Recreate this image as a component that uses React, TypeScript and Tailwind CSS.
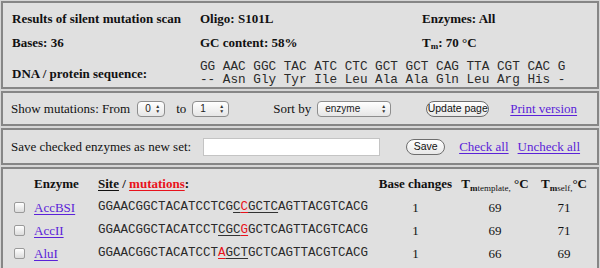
import React from "react";

const serif = { fontFamily: '"Liberation Serif", "Times New Roman", serif' };
const mono = { fontFamily: '"Liberation Mono", "Courier New", monospace' };

function Select({ w, label }: { w: number; label: string }) {
  return (
    <div
      className="flex h-[16px] items-center justify-between rounded-[4px] border border-[#8e8e8e] bg-gradient-to-b from-[#ffffff] to-[#e6e6e6] pl-[7px] pr-[4px] text-[10px] text-[#222]"
      style={{ width: w, fontFamily: '"Liberation Sans", Arial, sans-serif' }}
    >
      <span>{label}</span>
      <span className="flex flex-col items-center leading-none text-[#333]">
        <span className="text-[5px] leading-[5px]">▲</span>
        <span className="text-[5px] leading-[5px]">▼</span>
      </span>
    </div>
  );
}

function Button({ w, label }: { w: number; label: string }) {
  return (
    <div
      className="flex h-[16px] items-center justify-center rounded-full border border-[#6e6e6e] bg-gradient-to-b from-[#ffffff] to-[#e8e8e8] text-[10.5px] text-[#111]"
      style={{ width: w, fontFamily: '"Liberation Sans", Arial, sans-serif' }}
    >
      {label}
    </div>
  );
}

function Check() {
  return (
    <div className="h-[11px] w-[11px] rounded-[2px] border border-[#9a9a9a] bg-gradient-to-b from-[#ffffff] to-[#dcdcdc]" />
  );
}

function Seq({ pre, ul1, red, ul2, post }: { pre: string; ul1: string; red: string; ul2: string; post: string }) {
  return (
    <span style={mono} className="text-[12.5px] text-[#2a2a2a]">
      {pre}
      <span className="underline decoration-[#333] underline-offset-2">{ul1}</span>
      <span className="text-[#e8121b] underline decoration-[#e8121b] underline-offset-2">{red}</span>
      <span className="underline decoration-[#333] underline-offset-2">{ul2}</span>
      {post}
    </span>
  );
}

const Link = ({ children }: { children: React.ReactNode }) => (
  <span className="text-[#5a22d8] underline decoration-[#5a22d8] underline-offset-2">{children}</span>
);

export default function App() {
  const rows = [
    { name: "AccBSI", pre: "GGAACGGCTACATCCTCG", ul1: "C", red: "C", ul2: "GCTC", post: "AGTTACGTCACG", b: "1", t1: "69", t2: "71" },
    { name: "AccII", pre: "GGAACGGCTACATCCT", ul1: "CGC", red: "G", ul2: "", post: "GCTCAGTTACGTCACG", b: "1", t1: "69", t2: "71" },
    { name: "AluI", pre: "GGAACGGCTACATCCT", ul1: "", red: "A", ul2: "GCT", post: "GCTCAGTTACGTCACG", b: "1", t1: "66", t2: "69" },
  ];
  return (
    <div
      className="flex h-[268px] w-[600px] flex-col gap-[2px] overflow-hidden bg-[#d6d6d6] px-[1px] pt-[1px] text-[#111]"
      style={serif}
    >
      {/* Panel 1 */}
      <div className="h-[88px] shrink-0 border-2 border-[#868686] bg-[#e0e0e0]">
        <div className="grid grid-cols-[188px_222px_1fr] pl-[9px] pt-[7px] text-[13px] font-bold">
          <div className="h-[24px] leading-[17px]">Results of silent mutation scan</div>
          <div className="h-[24px] leading-[17px]">Oligo: S101L</div>
          <div className="h-[24px] leading-[17px]">Enzymes: All</div>
          <div className="h-[24px] leading-[17px]">Bases: 36</div>
          <div className="h-[24px] leading-[17px]">GC content: 58%</div>
          <div className="h-[24px] leading-[17px]">
            T<sub className="text-[9px]">m</sub>: 70 °C
          </div>
          <div className="flex items-center pt-[3px] leading-[17px]">DNA / protein sequence:</div>
          <div className="col-span-2 whitespace-pre pt-[2px] font-normal text-[12.7px] leading-[13px] text-[#2a2a2a]" style={mono}>
            <div>GG AAC GGC TAC ATC CTC GCT GCT CAG TTA CGT CAC G</div>
            <div>-- Asn Gly Tyr Ile Leu Ala Ala Gln Leu Arg His -</div>
          </div>
        </div>
      </div>

      {/* Panel 2 */}
      <div className="flex h-[35px] shrink-0 items-center border-2 border-[#868686] bg-[#e0e0e0] pl-[8px] text-[13px]">
        <span>Show mutations: From</span>
        <div className="ml-[7px]"><Select w={28} label="0" /></div>
        <span className="ml-[11px]">to</span>
        <div className="ml-[6px]"><Select w={37} label="1" /></div>
        <span className="ml-[44px]">Sort by</span>
        <div className="ml-[6px]"><Select w={74} label="enzyme" /></div>
        <div className="ml-[35px]"><Button w={63} label="Update page" /></div>
        <span className="ml-[21px]"><Link>Print version</Link></span>
      </div>

      {/* Panel 3 */}
      <div className="flex h-[37px] shrink-0 items-center border-2 border-[#868686] bg-[#e0e0e0] pl-[8px] text-[13px]">
        <span>Save checked enzymes as new set:</span>
        <div className="ml-[12px] h-[18px] w-[177px] border border-[#c4c4c4] bg-white" />
        <div className="ml-[26px]"><Button w={39} label="Save" /></div>
        <span className="ml-[14px]"><Link>Check all</Link></span>
        <span className="ml-[9px]"><Link>Uncheck all</Link></span>
      </div>

      {/* Panel 4 */}
      <div className="flex-1 border-2 border-b-0 border-[#868686] bg-[#e0e0e0]">
        <div className="grid grid-cols-[20px_64px_281px_73px_86px_52px] pl-[11px] pt-[3px] text-[13px]">
          <div className="h-[24px]" />
          <div className="flex h-[24px] items-center font-bold">Enzyme</div>
          <div className="flex h-[24px] items-center font-bold">
            <span className="underline underline-offset-2">Site</span>
            <span>&nbsp;/&nbsp;</span>
            <span className="text-[#e8121b] underline decoration-[#e8121b] underline-offset-2">mutations</span>
            <span>:</span>
          </div>
          <div className="flex h-[24px] items-center justify-center whitespace-nowrap font-bold">Base changes</div>
          <div className="flex h-[24px] items-center justify-center whitespace-nowrap font-bold">
            <span>
              T<sub className="text-[9px]">m</sub><sub className="text-[9px] font-normal">template,</sub> °C
            </span>
          </div>
          <div className="flex h-[24px] items-center justify-center whitespace-nowrap font-bold">
            <span>
              T<sub className="text-[9px]">m</sub><sub className="text-[9px] font-normal">self,</sub>°C
            </span>
          </div>
          {rows.map((r) => (
            <React.Fragment key={r.name}>
              <div className="flex h-[23px] items-center"><Check /></div>
              <div className="flex h-[23px] items-center"><Link>{r.name}</Link></div>
              <div className="flex h-[23px] items-center">
                <Seq pre={r.pre} ul1={r.ul1} red={r.red} ul2={r.ul2} post={r.post} />
              </div>
              <div className="flex h-[23px] items-center justify-center">{r.b}</div>
              <div className="flex h-[23px] items-center justify-center">{r.t1}</div>
              <div className="flex h-[23px] items-center justify-center">{r.t2}</div>
            </React.Fragment>
          ))}
        </div>
      </div>
    </div>
  );
}
